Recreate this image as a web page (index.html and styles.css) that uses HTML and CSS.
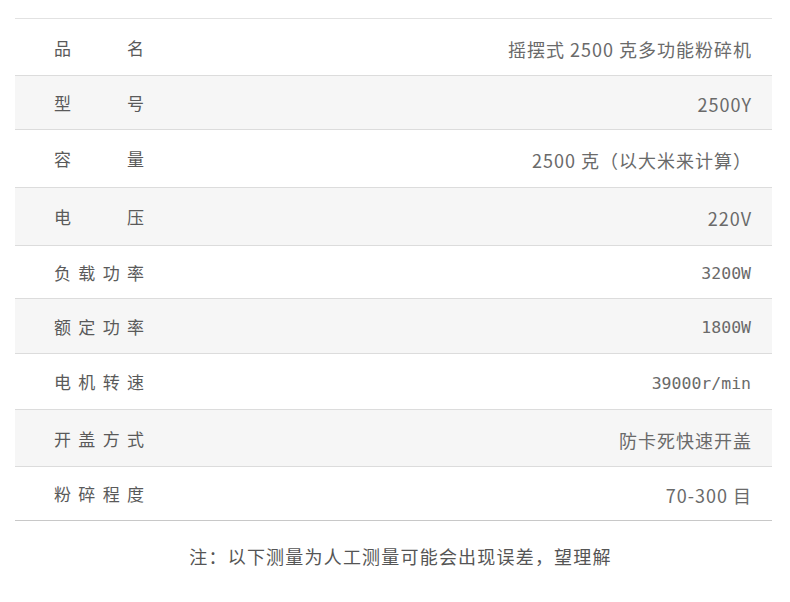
FILE: index.html
```html
<!DOCTYPE html>
<html lang="zh-CN">
<head>
  <meta charset="UTF-8" />
  <title>参数</title>
  <link rel="stylesheet" href="styles.css">
</head>
<body>
  <div class="spec-table">
    <div class="row">
      <div class="label"><span>品</span><span>名</span></div>
      <div class="value">摇摆式 2500 克多功能粉碎机</div>
    </div>
    <div class="row alt">
      <div class="label"><span>型</span><span>号</span></div>
      <div class="value">2500Y</div>
    </div>
    <div class="row">
      <div class="label"><span>容</span><span>量</span></div>
      <div class="value">2500 克（以大米来计算）</div>
    </div>
    <div class="row alt">
      <div class="label"><span>电</span><span>压</span></div>
      <div class="value">220V</div>
    </div>
    <div class="row">
      <div class="label"><span>负</span><span>载</span><span>功</span><span>率</span></div>
      <div class="value mono">3200W</div>
    </div>
    <div class="row alt">
      <div class="label"><span>额</span><span>定</span><span>功</span><span>率</span></div>
      <div class="value mono">1800W</div>
    </div>
    <div class="row">
      <div class="label"><span>电</span><span>机</span><span>转</span><span>速</span></div>
      <div class="value mono">39000r/min</div>
    </div>
    <div class="row alt">
      <div class="label"><span>开</span><span>盖</span><span>方</span><span>式</span></div>
      <div class="value">防卡死快速开盖</div>
    </div>
    <div class="row last">
      <div class="label"><span>粉</span><span>碎</span><span>程</span><span>度</span></div>
      <div class="value">70-300 目</div>
    </div>
  </div>
  <p class="note">注：以下测量为人工测量可能会出现误差，望理解</p>
</body>
</html>
```

FILE: styles.css
```css
body {
  margin: 0;
  padding: 18px 18px 0 15px;
  background: #fff;
  font-family: "Noto Sans CJK SC", "Noto Sans", sans-serif;
  color: #666;
}
.spec-table {
  width: 757px;
  border-top: 1px solid #e2e2e2;
}
.row {
  height: 55px;
  display: flex;
  align-items: center;
  justify-content: space-between;
  padding: 0 21px 0 39px;
  border-bottom: 1px solid #dcdcdc;
}
/* row heights follow the original artwork */
.row:nth-child(1) { height: 56px; }
.row:nth-child(2) { height: 53px; }
.row:nth-child(3) { height: 57px; }
.row:nth-child(4) { height: 57px; }
.row:nth-child(5) { height: 52px; }
.row:nth-child(6) { height: 54px; }
.row:nth-child(7) { height: 55px; }
.row:nth-child(8) { height: 56px; }
.row:nth-child(9) { height: 53px; }
.row.alt {
  background: #f6f6f6;
}
.row.last {
  border-bottom-color: #c8c8c8;
}
.label {
  width: 90px;
  display: flex;
  justify-content: space-between;
  font-size: 17px;
  color: #5a5a5a;
}
.value {
  font-size: 18px;
  letter-spacing: 1px;
  margin-right: -1px;
  padding-top: 3px;
  color: #6a6a6a;
}
.value.mono {
  font-family: "DejaVu Sans Mono", monospace;
  font-size: 16.5px;
  letter-spacing: 0;
  margin-right: 0;
}
.note {
  margin: 22px 0 0 14px;
  text-align: center;
  font-size: 18px;
  letter-spacing: 1.2px;
  color: #555;
}
```
